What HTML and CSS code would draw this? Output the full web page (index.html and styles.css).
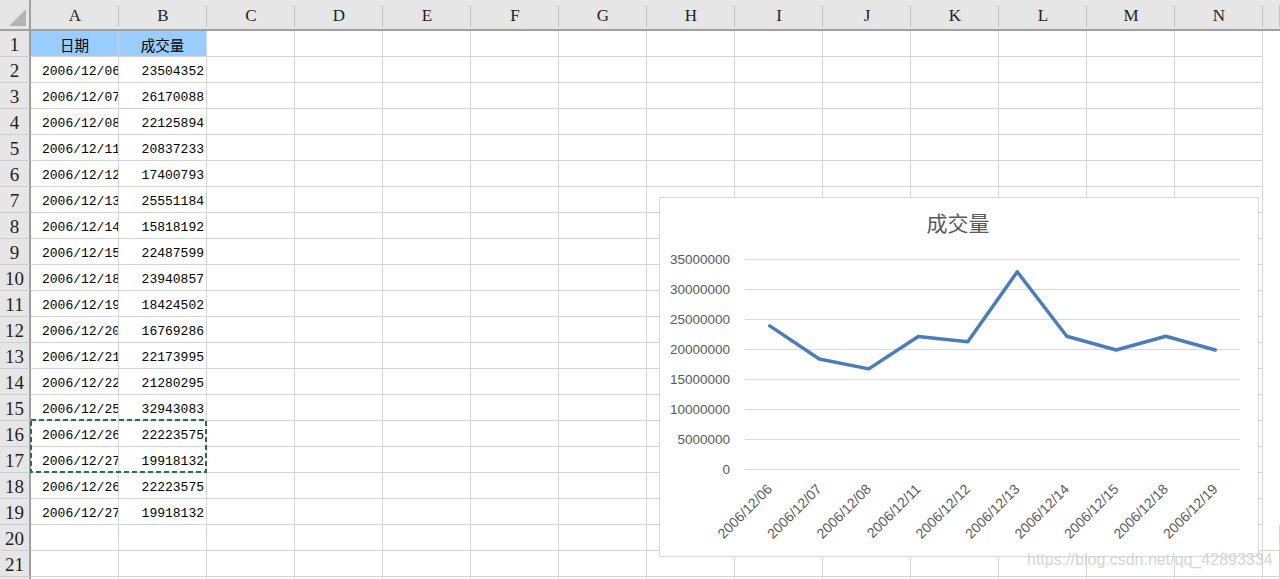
FILE: index.html
```html
<!DOCTYPE html>
<html lang="zh-CN">
<head>
<meta charset="utf-8">
<title>Sheet</title>
<link rel="stylesheet" href="styles.css">
</head>
<body>
<div class="sheet">
  <div class="r hr">
    <div class="corner"><svg width="29" height="29" viewBox="0 0 29 29"><polygon points="9,26 26,26 26,9" fill="#b4b4b4"/></svg></div>
    <div class="ch">A</div><div class="ch">B</div><div class="ch">C</div><div class="ch">D</div><div class="ch">E</div><div class="ch">F</div><div class="ch">G</div><div class="ch">H</div><div class="ch">I</div><div class="ch">J</div><div class="ch">K</div><div class="ch">L</div><div class="ch">M</div><div class="ch">N</div><div class="ch"></div>
  </div>
  <div class="r"><div class="rh">1</div><div class="c t">日期</div><div class="c t">成交量</div><div class="c"></div><div class="c"></div><div class="c"></div><div class="c"></div><div class="c"></div><div class="c"></div><div class="c"></div><div class="c"></div><div class="c"></div><div class="c"></div><div class="c"></div><div class="c"></div></div>
  <div class="r"><div class="rh">2</div><div class="c d">2006/12/06</div><div class="c n">23504352</div><div class="c"></div><div class="c"></div><div class="c"></div><div class="c"></div><div class="c"></div><div class="c"></div><div class="c"></div><div class="c"></div><div class="c"></div><div class="c"></div><div class="c"></div><div class="c"></div></div>
  <div class="r"><div class="rh">3</div><div class="c d">2006/12/07</div><div class="c n">26170088</div><div class="c"></div><div class="c"></div><div class="c"></div><div class="c"></div><div class="c"></div><div class="c"></div><div class="c"></div><div class="c"></div><div class="c"></div><div class="c"></div><div class="c"></div><div class="c"></div></div>
  <div class="r"><div class="rh">4</div><div class="c d">2006/12/08</div><div class="c n">22125894</div><div class="c"></div><div class="c"></div><div class="c"></div><div class="c"></div><div class="c"></div><div class="c"></div><div class="c"></div><div class="c"></div><div class="c"></div><div class="c"></div><div class="c"></div><div class="c"></div></div>
  <div class="r"><div class="rh">5</div><div class="c d">2006/12/11</div><div class="c n">20837233</div><div class="c"></div><div class="c"></div><div class="c"></div><div class="c"></div><div class="c"></div><div class="c"></div><div class="c"></div><div class="c"></div><div class="c"></div><div class="c"></div><div class="c"></div><div class="c"></div></div>
  <div class="r"><div class="rh">6</div><div class="c d">2006/12/12</div><div class="c n">17400793</div><div class="c"></div><div class="c"></div><div class="c"></div><div class="c"></div><div class="c"></div><div class="c"></div><div class="c"></div><div class="c"></div><div class="c"></div><div class="c"></div><div class="c"></div><div class="c"></div></div>
  <div class="r"><div class="rh">7</div><div class="c d">2006/12/13</div><div class="c n">25551184</div><div class="c"></div><div class="c"></div><div class="c"></div><div class="c"></div><div class="c"></div><div class="c"></div><div class="c"></div><div class="c"></div><div class="c"></div><div class="c"></div><div class="c"></div><div class="c"></div></div>
  <div class="r"><div class="rh">8</div><div class="c d">2006/12/14</div><div class="c n">15818192</div><div class="c"></div><div class="c"></div><div class="c"></div><div class="c"></div><div class="c"></div><div class="c"></div><div class="c"></div><div class="c"></div><div class="c"></div><div class="c"></div><div class="c"></div><div class="c"></div></div>
  <div class="r"><div class="rh">9</div><div class="c d">2006/12/15</div><div class="c n">22487599</div><div class="c"></div><div class="c"></div><div class="c"></div><div class="c"></div><div class="c"></div><div class="c"></div><div class="c"></div><div class="c"></div><div class="c"></div><div class="c"></div><div class="c"></div><div class="c"></div></div>
  <div class="r"><div class="rh">10</div><div class="c d">2006/12/18</div><div class="c n">23940857</div><div class="c"></div><div class="c"></div><div class="c"></div><div class="c"></div><div class="c"></div><div class="c"></div><div class="c"></div><div class="c"></div><div class="c"></div><div class="c"></div><div class="c"></div><div class="c"></div></div>
  <div class="r"><div class="rh">11</div><div class="c d">2006/12/19</div><div class="c n">18424502</div><div class="c"></div><div class="c"></div><div class="c"></div><div class="c"></div><div class="c"></div><div class="c"></div><div class="c"></div><div class="c"></div><div class="c"></div><div class="c"></div><div class="c"></div><div class="c"></div></div>
  <div class="r"><div class="rh">12</div><div class="c d">2006/12/20</div><div class="c n">16769286</div><div class="c"></div><div class="c"></div><div class="c"></div><div class="c"></div><div class="c"></div><div class="c"></div><div class="c"></div><div class="c"></div><div class="c"></div><div class="c"></div><div class="c"></div><div class="c"></div></div>
  <div class="r"><div class="rh">13</div><div class="c d">2006/12/21</div><div class="c n">22173995</div><div class="c"></div><div class="c"></div><div class="c"></div><div class="c"></div><div class="c"></div><div class="c"></div><div class="c"></div><div class="c"></div><div class="c"></div><div class="c"></div><div class="c"></div><div class="c"></div></div>
  <div class="r"><div class="rh">14</div><div class="c d">2006/12/22</div><div class="c n">21280295</div><div class="c"></div><div class="c"></div><div class="c"></div><div class="c"></div><div class="c"></div><div class="c"></div><div class="c"></div><div class="c"></div><div class="c"></div><div class="c"></div><div class="c"></div><div class="c"></div></div>
  <div class="r"><div class="rh">15</div><div class="c d">2006/12/25</div><div class="c n">32943083</div><div class="c"></div><div class="c"></div><div class="c"></div><div class="c"></div><div class="c"></div><div class="c"></div><div class="c"></div><div class="c"></div><div class="c"></div><div class="c"></div><div class="c"></div><div class="c"></div></div>
  <div class="r"><div class="rh">16</div><div class="c d">2006/12/26</div><div class="c n">22223575</div><div class="c"></div><div class="c"></div><div class="c"></div><div class="c"></div><div class="c"></div><div class="c"></div><div class="c"></div><div class="c"></div><div class="c"></div><div class="c"></div><div class="c"></div><div class="c"></div></div>
  <div class="r"><div class="rh">17</div><div class="c d">2006/12/27</div><div class="c n">19918132</div><div class="c"></div><div class="c"></div><div class="c"></div><div class="c"></div><div class="c"></div><div class="c"></div><div class="c"></div><div class="c"></div><div class="c"></div><div class="c"></div><div class="c"></div><div class="c"></div></div>
  <div class="r"><div class="rh">18</div><div class="c d">2006/12/26</div><div class="c n">22223575</div><div class="c"></div><div class="c"></div><div class="c"></div><div class="c"></div><div class="c"></div><div class="c"></div><div class="c"></div><div class="c"></div><div class="c"></div><div class="c"></div><div class="c"></div><div class="c"></div></div>
  <div class="r"><div class="rh">19</div><div class="c d">2006/12/27</div><div class="c n">19918132</div><div class="c"></div><div class="c"></div><div class="c"></div><div class="c"></div><div class="c"></div><div class="c"></div><div class="c"></div><div class="c"></div><div class="c"></div><div class="c"></div><div class="c"></div><div class="c"></div></div>
  <div class="r"><div class="rh">20</div><div class="c"></div><div class="c"></div><div class="c"></div><div class="c"></div><div class="c"></div><div class="c"></div><div class="c"></div><div class="c"></div><div class="c"></div><div class="c"></div><div class="c"></div><div class="c"></div><div class="c"></div><div class="c"></div><div class="c"></div></div>
  <div class="r"><div class="rh">21</div><div class="c"></div><div class="c"></div><div class="c"></div><div class="c"></div><div class="c"></div><div class="c"></div><div class="c"></div><div class="c"></div><div class="c"></div><div class="c"></div><div class="c"></div><div class="c"></div><div class="c"></div><div class="c"></div><div class="c"></div></div>
  <div class="r"><div class="rh"></div><div class="c"></div><div class="c"></div><div class="c"></div><div class="c"></div><div class="c"></div><div class="c"></div><div class="c"></div><div class="c"></div><div class="c"></div><div class="c"></div><div class="c"></div><div class="c"></div><div class="c"></div><div class="c"></div><div class="c"></div></div>

  <svg class="marquee" width="177" height="54" viewBox="0 0 177 54"><rect x="1" y="1" width="175" height="52" fill="none" stroke="#217346" stroke-width="2" stroke-dasharray="5 3"/></svg>

  <div class="chart">
    <svg width="598" height="358" viewBox="0 0 598 358">
      <text class="title" x="298" y="33" text-anchor="middle">成交量</text>
      <g stroke="#d9d9d9" stroke-width="1">
        <line x1="85" y1="61.5" x2="580" y2="61.5"/>
        <line x1="85" y1="91.5" x2="580" y2="91.5"/>
        <line x1="85" y1="121.5" x2="580" y2="121.5"/>
        <line x1="85" y1="151.5" x2="580" y2="151.5"/>
        <line x1="85" y1="181.5" x2="580" y2="181.5"/>
        <line x1="85" y1="211.5" x2="580" y2="211.5"/>
        <line x1="85" y1="241.5" x2="580" y2="241.5"/>
        <line x1="85" y1="271.5" x2="580" y2="271.5"/>
      </g>
      <g class="ylab" text-anchor="end">
        <text x="70" y="66">35000000</text>
        <text x="70" y="96">30000000</text>
        <text x="70" y="126">25000000</text>
        <text x="70" y="156">20000000</text>
        <text x="70" y="186">15000000</text>
        <text x="70" y="216">10000000</text>
        <text x="70" y="246">5000000</text>
        <text x="70" y="276">0</text>
      </g>
      <polyline fill="none" stroke="#4a7ebb" stroke-width="3.5" stroke-linejoin="round" stroke-linecap="round"
        points="109.75,127.9 159.25,161 208.75,170.9 258.25,138.5 307.75,143.8 357.25,73.8 406.75,138.2 456.25,152 505.75,138.2 555.25,152"/>
      <g class="xlab" text-anchor="end">
        <text x="113" y="292" transform="rotate(-45 113 292)">2006/12/06</text>
        <text x="162.5" y="292" transform="rotate(-45 162.5 292)">2006/12/07</text>
        <text x="212" y="292" transform="rotate(-45 212 292)">2006/12/08</text>
        <text x="261.5" y="292" transform="rotate(-45 261.5 292)">2006/12/11</text>
        <text x="311" y="292" transform="rotate(-45 311 292)">2006/12/12</text>
        <text x="360.5" y="292" transform="rotate(-45 360.5 292)">2006/12/13</text>
        <text x="410" y="292" transform="rotate(-45 410 292)">2006/12/14</text>
        <text x="459.5" y="292" transform="rotate(-45 459.5 292)">2006/12/15</text>
        <text x="509" y="292" transform="rotate(-45 509 292)">2006/12/18</text>
        <text x="558.5" y="292" transform="rotate(-45 558.5 292)">2006/12/19</text>
      </g>
    </svg>
  </div>

  <div class="watermark">https://blog.csdn.net/qq_42893334</div>
</div>
</body>
</html>
```

FILE: styles.css
```css
html, body {
  margin: 0;
  padding: 0;
  background: #ffffff;
  overflow: hidden;
}

.sheet {
  position: relative;
  width: 1280px;
  height: 579px;
  overflow: hidden;
}

.r {
  display: grid;
  grid-template-columns: 31px repeat(14, 88px) 1fr;
  height: 26px;
}

.r > div {
  box-sizing: border-box;
  border-right: 1px solid #d4d4d4;
  border-bottom: 1px solid #d4d4d4;
  overflow: hidden;
  white-space: nowrap;
}

.hr {
  height: 31px;
  background: #e6e6e6;
}

.hr > div {
  border-right: none;
  border-bottom: 2px solid #a0a0a0;
  background-image: linear-gradient(#c4c4c4, #c4c4c4);
  background-size: 1px calc(100% - 7px);
  background-position: right 5px;
  background-repeat: no-repeat;
}

.hr > .corner {
  border-right: 2px solid #a0a0a0;
  background-image: none;
  display: flex;
}

.ch {
  display: flex;
  align-items: center;
  justify-content: center;
  padding-top: 3px;
  font-family: "Liberation Serif", "Times New Roman", serif;
  font-size: 17px;
  color: #1e1e1e;
}

.rh {
  background: #e6e6e6;
  border-right: 2px solid #a0a0a0 !important;
  border-bottom-color: #cfcfcf !important;
  display: flex;
  align-items: center;
  justify-content: center;
  font-family: "Liberation Serif", "Times New Roman", serif;
  font-size: 19px;
  color: #1e1e1e;
  padding-top: 2px;
}

.c {
  font-family: "Liberation Mono", "Courier New", monospace;
  font-size: 13px;
  color: #000;
  display: flex;
  align-items: center;
  padding-top: 3px;
}

.c.d {
  padding-left: 11px;
}

.c.n {
  justify-content: flex-end;
  padding-right: 2px;
}

.c.t {
  background: #99ccff;
  justify-content: center;
  font-family: "Noto Sans CJK SC", sans-serif;
  font-size: 14.5px;
  padding-top: 1px;
}

.marquee {
  position: absolute;
  left: 30px;
  top: 419px;
}

.chart {
  position: absolute;
  left: 659px;
  top: 197px;
  width: 600px;
  height: 360px;
  box-sizing: border-box;
  border: 1px solid #d9d9d9;
  background: #ffffff;
}

.chart svg {
  display: block;
}

.title {
  font-family: "Noto Sans CJK SC", sans-serif;
  font-size: 21px;
  fill: #595959;
}

.ylab text, .xlab text {
  font-family: "Liberation Sans", Arial, sans-serif;
  font-size: 13.5px;
  fill: #595959;
}

.xlab text {
  font-size: 14px;
}

.watermark {
  position: absolute;
  left: 1027px;
  top: 551px;
  font-family: "Liberation Sans", Arial, sans-serif;
  font-size: 16px;
  color: rgba(205, 205, 205, 0.85);
  white-space: nowrap;
}
```
